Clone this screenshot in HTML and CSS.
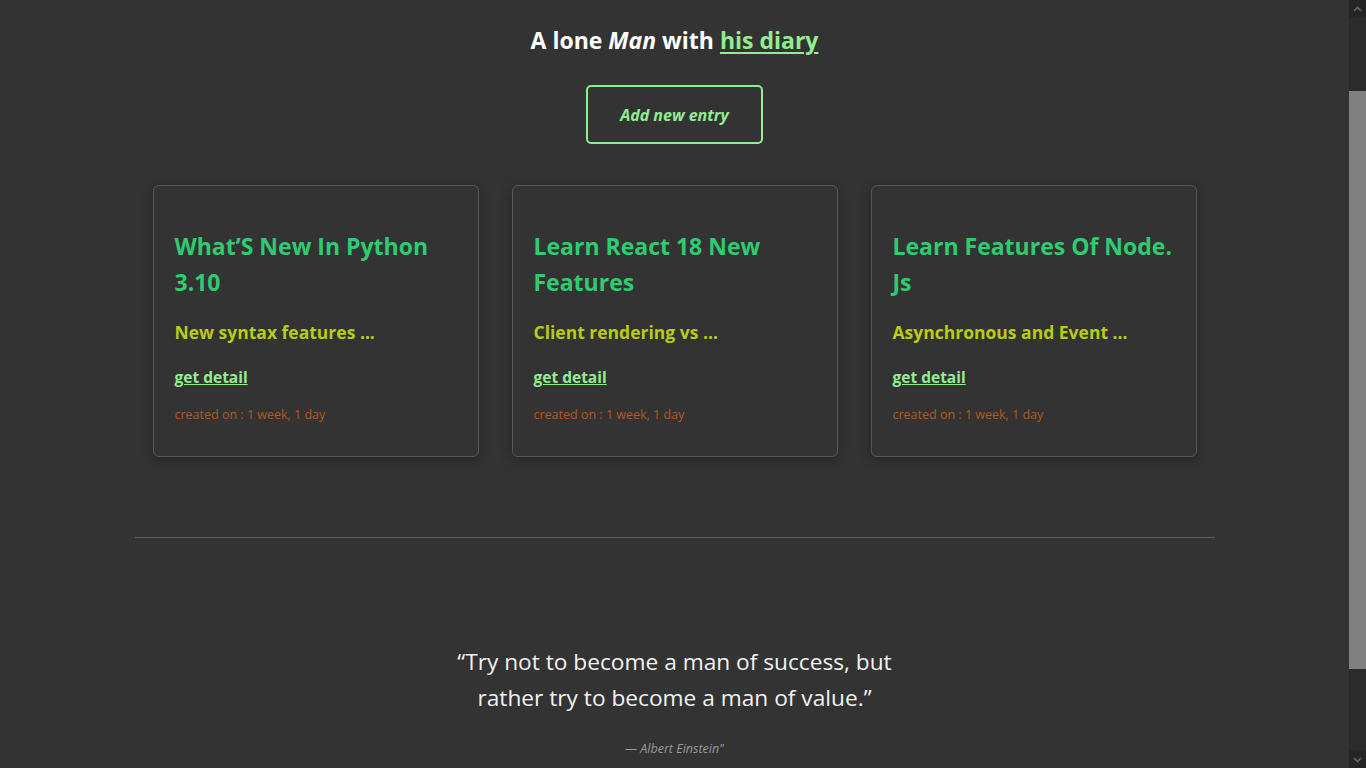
FILE: index.html
```html
<!DOCTYPE html>
<html lang="en">
<head>
<meta charset="utf-8">
<title>A lone Man with his diary</title>
<link rel="stylesheet" href="styles.css">
</head>
<body>
<div class="window">
  <div class="viewport">
    <main class="page">
      <h1 class="site-title">A lone <em>Man</em> with <a href="#" class="title-link">his diary</a></h1>
      <div class="actions">
        <a href="#" class="btn-add">Add new entry</a>
      </div>
      <section class="cards">
        <article class="card">
          <h2 class="card-title">What’S New In Python 3.10</h2>
          <h3 class="card-sub">New syntax features ...</h3>
          <a href="#" class="card-link">get detail</a>
          <p class="card-date">created on : 1 week, 1 day</p>
        </article>
        <article class="card">
          <h2 class="card-title">Learn React 18 New Features</h2>
          <h3 class="card-sub">Client rendering vs ...</h3>
          <a href="#" class="card-link">get detail</a>
          <p class="card-date">created on : 1 week, 1 day</p>
        </article>
        <article class="card">
          <h2 class="card-title">Learn Features Of Node. Js</h2>
          <h3 class="card-sub">Asynchronous and Event ...</h3>
          <a href="#" class="card-link">get detail</a>
          <p class="card-date">created on : 1 week, 1 day</p>
        </article>
      </section>
      <hr class="divider">
      <blockquote class="quote">
        <p class="quote-text">“Try not to become a man of success, but rather try to become a man of value.”</p>
        <p class="quote-author">— Albert Einstein"</p>
      </blockquote>
    </main>
  </div>
  <div class="scrollbar" aria-hidden="true">
    <div class="sb-button">
      <svg width="9" height="6" viewBox="0 0 9 6"><path d="M1 5 L4.5 1.5 L8 5" fill="none" stroke="#6a6a6a" stroke-width="1.6"/></svg>
    </div>
    <div class="sb-track">
      <div class="sb-thumb"></div>
    </div>
    <div class="sb-button">
      <svg width="9" height="6" viewBox="0 0 9 6"><path d="M1 1 L4.5 4.5 L8 1" fill="none" stroke="#6a6a6a" stroke-width="1.6"/></svg>
    </div>
  </div>
</div>
</body>
</html>
```
FILE: styles.css
```css
html,
body {
  margin: 0;
  height: 100%;
  overflow: hidden;
  background: #333333;
}
body {
  color: #ffffff;
  font-family: "Open Sans", "Noto Sans", "Liberation Sans", sans-serif;
}
.window {
  display: flex;
  height: 100vh;
}
.viewport {
  flex: 1;
  min-width: 0;
  overflow: hidden;
}
.scrollbar {
  width: 17px;
  flex: none;
  display: flex;
  flex-direction: column;
  background: #2b2b2b;
}
.sb-button {
  height: 17px;
  flex: none;
  display: flex;
  align-items: center;
  justify-content: center;
  background: #252525;
}
.sb-track {
  flex: 1;
  padding-top: 74px;
}
.sb-thumb {
  height: 578px;
  background: #808080;
}
.page {
  width: 1080px;
  margin: 0 auto;
  padding-bottom: 118px;
}
.site-title {
  margin: 22px 0 0;
  font-size: 23px;
  line-height: 36px;
  font-weight: 700;
  text-align: center;
  color: #ffffff;
}
.site-title em {
  font-style: italic;
}
.title-link {
  color: #90ee90;
  text-decoration: underline;
  text-underline-offset: 3px;
  text-decoration-thickness: 2px;
}
.actions {
  display: flex;
  justify-content: center;
  margin-top: 27px;
}
.btn-add {
  display: flex;
  align-items: center;
  justify-content: center;
  box-sizing: border-box;
  width: 177px;
  height: 59px;
  border: 2px solid #90ee90;
  border-radius: 5px;
  color: #90ee90;
  font-size: 16px;
  font-weight: 700;
  font-style: italic;
  text-decoration: none;
}
.cards {
  display: flex;
  justify-content: center;
  gap: 33px;
  margin-top: 41px;
}
.card {
  box-sizing: border-box;
  width: 326px;
  height: 272px;
  padding: 42px 20px 0 21px;
  border: 1px solid #585858;
  border-radius: 6px;
  box-shadow: 0 3px 12px rgba(0, 0, 0, 0.28);
  display: flex;
  flex-direction: column;
  align-items: flex-start;
}
.card-title {
  margin: 0;
  font-size: 23px;
  line-height: 36px;
  font-weight: 700;
  color: #2ecc71;
}
.card-sub {
  margin: 19px 0 0;
  font-size: 17.5px;
  line-height: 27px;
  font-weight: 700;
  color: #b9cc13;
}
.card-link {
  margin-top: 19px;
  font-size: 15.5px;
  line-height: 24px;
  font-weight: 700;
  color: #90ee90;
  text-decoration: underline;
}
.card-date {
  margin: 16px 0 0;
  font-size: 12.5px;
  line-height: 20px;
  color: #b5581b;
}
.divider {
  margin: 80px 0 0;
  border: 0;
  border-top: 1px solid #5e5e5e;
}
.quote {
  margin: 106px auto 0;
  text-align: center;
}
.quote-text {
  margin: 0 auto;
  max-width: 450px;
  font-size: 22.7px;
  line-height: 36px;
  color: #f2f2f2;
}
.quote-author {
  margin: 23px 0 0;
  font-size: 12.5px;
  line-height: 20px;
  font-style: italic;
  color: #9a9a9a;
}
```
